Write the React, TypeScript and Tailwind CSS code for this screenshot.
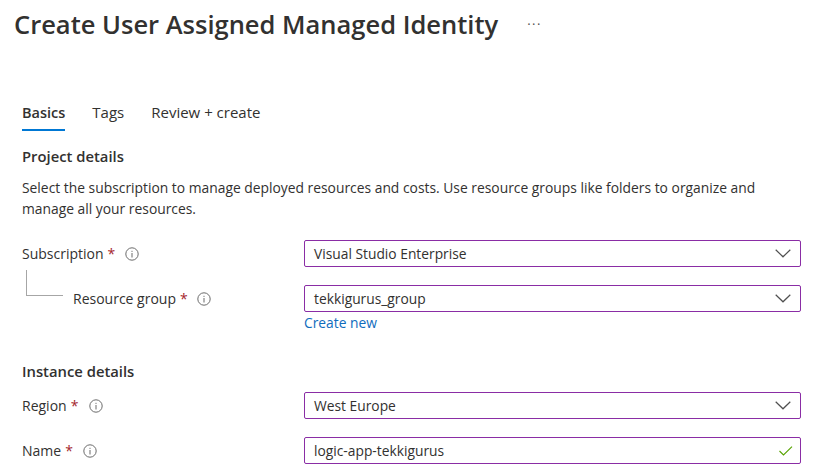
import React from 'react'

function InfoIcon() {
    return (
        <svg width="14" height="14" viewBox="0 0 14 14" className="shrink-0">
            <circle cx="7" cy="7" r="6.2" fill="none" stroke="#6b6b6b" strokeWidth="1" />
            <rect x="6.5" y="6" width="1" height="4.5" fill="#6b6b6b" />
            <rect x="6.5" y="3.8" width="1" height="1.1" fill="#6b6b6b" />
        </svg>
    )
}

function Label({ text, gap = 'ml-[10px]' }: { text: string; gap?: string }) {
    return (
        <div className="flex items-center">
            <span>{text}</span>
            <span className="ml-1 text-[#a4262c]">*</span>
            <span className={gap}>
                <InfoIcon />
            </span>
        </div>
    )
}

function Field({ value, valid }: { value: string; valid?: boolean }) {
    return (
        <div className="flex h-[27px] w-[497px] items-center justify-between rounded-[2px] border border-[#8a2da5] pl-[9px] pr-[9px] text-[13.8px]">
            <span>{value}</span>
            {valid ? (
                <svg width="14" height="10" viewBox="0 0 14 10" className="mr-[-2px]">
                    <path d="M0.5 5 L4.5 9 L13 0.7" fill="none" stroke="#57a300" strokeWidth="1.1" />
                </svg>
            ) : (
                <svg width="16" height="9" viewBox="0 0 16 9">
                    <path d="M0.7 0.7 L8 7.8 L15.3 0.7" fill="none" stroke="#505050" strokeWidth="1.2" />
                </svg>
            )}
        </div>
    )
}

export default function App() {
    return (
        <div className="h-[476px] w-[820px] overflow-hidden bg-white text-[14px] leading-[19px] text-[#323130] [font-family:'Open_Sans','Noto_Sans',sans-serif]">
            <div className="flex items-center pl-[14px] pt-[5px]">
                <h1 className="text-[25.5px] leading-[38px] font-semibold text-[#323130]">Create User Assigned Managed Identity</h1>
                <span className="ml-[29px] text-[13px] tracking-[1.5px] text-[#505050]">···</span>
            </div>

            <div className="mt-[60px] flex gap-[27px] pl-[22px] text-[15px] text-[#323130]">
                <div className="border-b-2 border-[#0078d4] pb-[7px] text-[14.5px] font-semibold">Basics</div>
                <div>Tags</div>
                <div>Review + create</div>
            </div>

            <div className="pl-[22px] pt-[16px]">
                <h2 className="text-[14.8px] font-semibold">Project details</h2>
                <p className="mt-[11px] w-[770px] text-[13.85px] leading-[21px]">
                    Select the subscription to manage deployed resources and costs. Use resource groups like folders to organize and manage all your resources.
                </p>

                <div className="mt-[21px] flex items-center">
                    <div className="w-[282px]">
                        <Label text="Subscription" />
                    </div>
                    <Field value="Visual Studio Enterprise" />
                </div>

                <div className="mt-[18px] flex items-center">
                    <div className="relative w-[282px] pl-[51px]">
                        <div className="absolute left-[4px] top-[-19px] h-[26px] w-[37px] border-b border-l border-[#a6a6a6]" />
                        <Label text="Resource group" gap="ml-[9px]" />
                    </div>
                    <Field value="tekkigurus_group" />
                </div>
                <div className="ml-[282px] mt-[1px] text-[13.8px] text-[#0f6cbd]">Create new</div>

                <h2 className="mt-[30px] text-[14.8px] font-semibold">Instance details</h2>

                <div className="mt-[11px] flex items-center">
                    <div className="w-[282px]">
                        <Label text="Region" gap="ml-[11px]" />
                    </div>
                    <Field value="West Europe" />
                </div>

                <div className="mt-[18px] flex items-center">
                    <div className="w-[282px]">
                        <Label text="Name" />
                    </div>
                    <Field value="logic-app-tekkigurus" valid />
                </div>
            </div>
        </div>
    )
}
